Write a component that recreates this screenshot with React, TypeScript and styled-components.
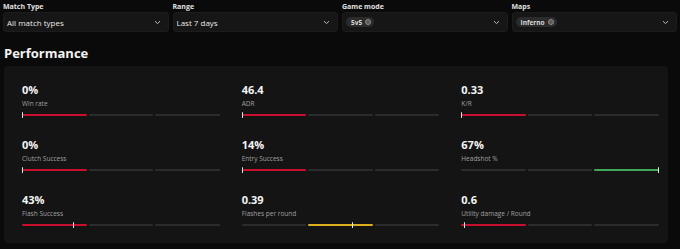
import React from "react";
import styled, { createGlobalStyle } from "styled-components";

const GlobalStyle = createGlobalStyle`
  body {
    margin: 0;
    background-color: #0a0a0a;
    font-family: "Open Sans", "Noto Sans", sans-serif;
    color: #ededed;
  }
`;

const SPage = styled.div`
  width: 680px;
  height: 249px;
  overflow: hidden;
  background-color: #0a0a0a;
`;

const SFilters = styled.div`
  display: grid;
  grid-template-columns: repeat(4, 1fr);
  column-gap: 4px;
  padding: 2px 3px 0 3px;
`;

const SFilter = styled.div`
  display: flex;
  flex-direction: column;
`;

const SFilterLabel = styled.span`
  font-size: 7px;
  font-weight: 700;
  line-height: 9px;
  color: #e0e0e0;
  margin-bottom: 1px;
`;

const SSelect = styled.div`
  height: 20px;
  display: flex;
  align-items: center;
  gap: 4px;
  padding: 0 7px 0 3px;
  background-color: #161616;
  border: 1px solid #1c1c1c;
  border-radius: 3px;
  box-sizing: border-box;
`;

const SSelectText = styled.span`
  flex: 1;
  font-size: 8px;
  color: #e8e8e8;
`;

const SChips = styled.div`
  flex: 1;
  display: flex;
`;

const SChip = styled.span`
  display: inline-flex;
  align-items: center;
  gap: 3px;
  height: 10px;
  padding: 0 3px 0 5px;
  background-color: #2b2b2b;
  border-radius: 5px;
  font-size: 6.5px;
  font-weight: 700;
  color: #d8d8d8;
`;

const SChipClose = styled.span`
  width: 4px;
  height: 4px;
  border-radius: 50%;
  border: 1px solid #8a8a8a;
  background-color: #5a5a5a;
  display: inline-block;
`;

const SChevron = styled.svg`
  width: 7px;
  height: 5px;
  flex-shrink: 0;
`;

const STitle = styled.h2`
  margin: 12px 0 0 4px;
  font-size: 13px;
  font-weight: 700;
  line-height: 18px;
  color: #f2f2f2;
`;

const SPanel = styled.div`
  margin: 4px 12px 0 4px;
  height: 177px;
  box-sizing: border-box;
  background-color: #141414;
  border-radius: 3px;
  padding: 17px 9px 0 18px;
  display: grid;
  grid-template-columns: repeat(3, 1fr);
  column-gap: 22px;
  row-gap: 22px;
  align-content: start;
`;

const SMetric = styled.div`
  display: flex;
  flex-direction: column;
`;

const SValue = styled.span`
  font-size: 11px;
  font-weight: 700;
  line-height: 13px;
  color: #f4f4f4;
`;

const SLabel = styled.span`
  font-size: 6.5px;
  line-height: 8px;
  margin-top: 4px;
  color: #a0a0a0;
`;

const SBar = styled.div`
  position: relative;
  margin-top: 6px;
  height: 2px;
  display: grid;
  grid-template-columns: repeat(3, 1fr);
  column-gap: 2px;
`;

const SSegment = styled.div<{ $color?: string }>`
  height: 2px;
  border-radius: 1px;
  background-color: ${(p) => p.$color || "#2c2c2c"};
`;

const STick = styled.div`
  position: absolute;
  top: -2px;
  width: 1px;
  height: 6px;
  background-color: #e6e6e6;
  border-radius: 0.5px;
`;

const COLORS = {
  red: "#c8102e",
  yellow: "#dcae1d",
  green: "#3fa85a",
};

type Metric = {
  value: string;
  label: string;
  segment: number;
  color: keyof typeof COLORS;
  tick: number;
};

const metrics: Metric[] = [
  { value: "0%", label: "Win rate", segment: 0, color: "red", tick: 0 },
  { value: "46.4", label: "ADR", segment: 0, color: "red", tick: 0 },
  { value: "0.33", label: "K/R", segment: 0, color: "red", tick: 0 },
  { value: "0%", label: "Clutch Success", segment: 0, color: "red", tick: 0 },
  { value: "14%", label: "Entry Success", segment: 0, color: "red", tick: 0 },
  { value: "67%", label: "Headshot %", segment: 2, color: "green", tick: 100 },
  { value: "43%", label: "Flash Success", segment: 0, color: "red", tick: 26 },
  { value: "0.39", label: "Flashes per round", segment: 1, color: "yellow", tick: 56 },
  { value: "0.6", label: "Utility damage / Round", segment: 0, color: "red", tick: 1.2 },
];

const Chevron = () => (
  <SChevron viewBox="0 0 7 5">
    <path d="M1 1.2 L3.5 3.6 L6 1.2" fill="none" stroke="#bdbdbd" strokeWidth="1" />
  </SChevron>
);

const Select = ({ text, chips }: { text?: string; chips?: string[] }) => (
  <SSelect>
    {chips ? (
      <SChips>
        {chips.map((c) => (
          <SChip key={c}>
            {c}
            <SChipClose />
          </SChip>
        ))}
      </SChips>
    ) : (
      <SSelectText>{text}</SSelectText>
    )}
    <Chevron />
  </SSelect>
);

const App = () => (
  <SPage>
    <GlobalStyle />
    <SFilters>
      <SFilter>
        <SFilterLabel>Match Type</SFilterLabel>
        <Select text="All match types" />
      </SFilter>
      <SFilter>
        <SFilterLabel>Range</SFilterLabel>
        <Select text="Last 7 days" />
      </SFilter>
      <SFilter>
        <SFilterLabel>Game mode</SFilterLabel>
        <Select chips={["5v5"]} />
      </SFilter>
      <SFilter>
        <SFilterLabel>Maps</SFilterLabel>
        <Select chips={["Inferno"]} />
      </SFilter>
    </SFilters>
    <STitle>Performance</STitle>
    <SPanel>
      {metrics.map((m) => (
        <SMetric key={m.label}>
          <SValue>{m.value}</SValue>
          <SLabel>{m.label}</SLabel>
          <SBar>
            {[0, 1, 2].map((i) => (
              <SSegment key={i} $color={i === m.segment ? COLORS[m.color] : undefined} />
            ))}
            <STick style={{ left: `calc(${m.tick}% - ${m.tick >= 100 ? 1 : 0}px)` }} />
          </SBar>
        </SMetric>
      ))}
    </SPanel>
  </SPage>
);

export default App;
